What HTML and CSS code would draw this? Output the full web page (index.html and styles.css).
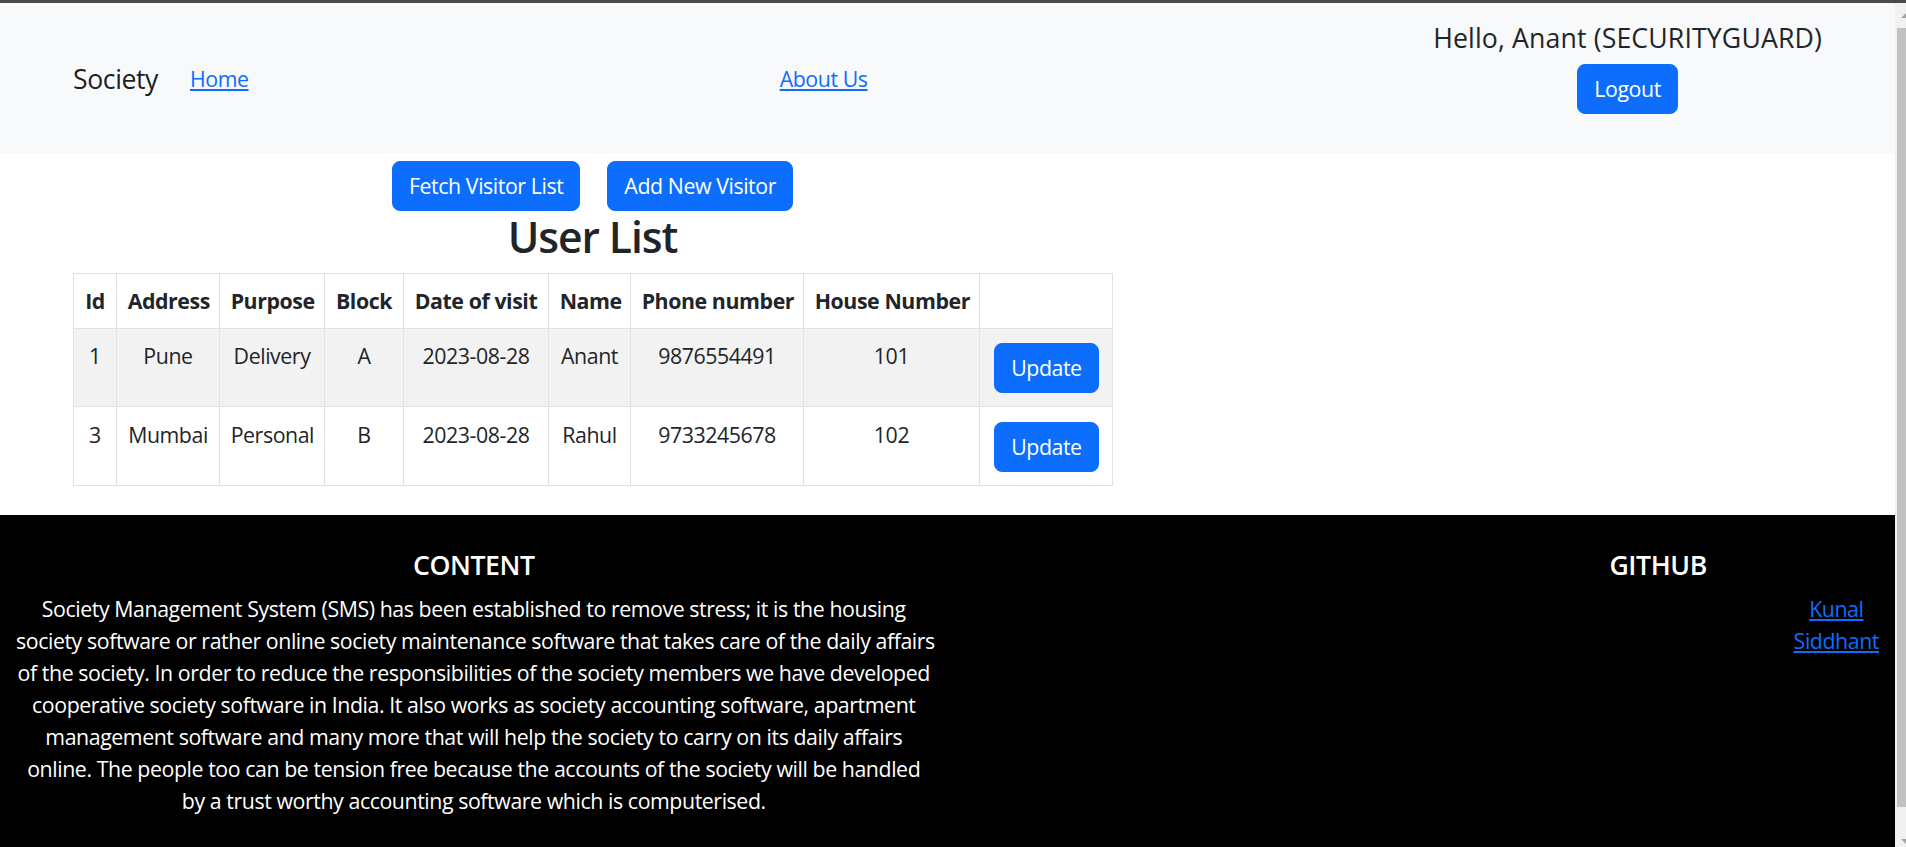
FILE: index.html
```html
<!DOCTYPE html>
<html lang="en">
<head>
<meta charset="utf-8">
<title>Society</title>
<link rel="stylesheet" href="styles.css">
</head>
<body>
<div class="window-edge"></div>
<div class="page">
  <nav class="navbar">
    <div class="nav-left">
      <a class="brand" href="#">Society</a>
      <a class="nav-link" href="#">Home</a>
    </div>
    <a class="nav-link" href="#">About Us</a>
    <div class="user-box">
      <h5 class="greeting">Hello, Anant (SECURITYGUARD)</h5>
      <button class="btn">Logout</button>
    </div>
  </nav>

  <main class="content">
    <div class="actions">
      <button class="btn">Fetch Visitor List</button>
      <button class="btn">Add New Visitor</button>
    </div>
    <h2 class="title">User List</h2>
    <table class="visitors">
      <colgroup>
        <col class="c-id"><col class="c-address"><col class="c-purpose"><col class="c-block"><col class="c-date"><col class="c-name"><col class="c-phone"><col class="c-house"><col class="c-action">
      </colgroup>
      <thead>
        <tr><th>Id</th><th>Address</th><th>Purpose</th><th>Block</th><th>Date of visit</th><th>Name</th><th>Phone number</th><th>House Number</th><th></th></tr>
      </thead>
      <tbody>
        <tr class="striped"><td>1</td><td>Pune</td><td>Delivery</td><td>A</td><td>2023-08-28</td><td>Anant</td><td>9876554491</td><td>101</td><td><button class="btn btn-row">Update</button></td></tr>
        <tr><td>3</td><td>Mumbai</td><td>Personal</td><td>B</td><td>2023-08-28</td><td>Rahul</td><td>9733245678</td><td>102</td><td><button class="btn btn-row">Update</button></td></tr>
      </tbody>
    </table>
  </main>

  <footer class="footer">
    <div class="footer-col about">
      <h5 class="footer-title">CONTENT</h5>
      <p class="footer-text">Society Management System (SMS) has been established to remove stress; it is the housing<br>society software or rather online society maintenance software that takes care of the daily affairs<br>of the society. In order to reduce the responsibilities of the society members we have developed<br>cooperative society software in India. It also works as society accounting software, apartment<br>management software and many more that will help the society to carry on its daily affairs<br>online. The people too can be tension free because the accounts of the society will be handled<br>by a trust worthy accounting software which is computerised.</p>
    </div>
    <div class="footer-col github">
      <h5 class="footer-title">GITHUB</h5>
      <div class="footer-links">
        <a href="#">Kunal</a>
        <a href="#">Siddhant</a>
      </div>
    </div>
  </footer>
</div>

<div class="scrollbar">
  <div class="sb-up"></div>
  <div class="sb-thumb"></div>
  <div class="sb-down"></div>
</div>
</body>
</html>
```

FILE: styles.css
```css
html {
  overflow: hidden;
}

body {
  margin: 0;
  font-family: "Open Sans", "Noto Sans", sans-serif;
  font-size: 21.33px;
  line-height: 1.5;
  color: #212529;
  background: #ffffff;
  letter-spacing: -0.02em;
}

.window-edge {
  height: 3px;
  background: #4a4a4a;
}

.page {
  width: 1895px;
}

/* ---------- navbar ---------- */
.navbar {
  display: flex;
  align-items: center;
  height: 150px;
  padding: 2px 73px 0;
  box-sizing: border-box;
  background: #f8f9fa;
}

.nav-left {
  display: flex;
  align-items: center;
  width: 696px;
  flex: none;
}

.brand {
  font-size: 26.67px;
  line-height: 40px;
  color: rgba(0, 0, 0, 0.9);
  text-decoration: none;
  margin-right: 21.33px;
}

.nav-link {
  padding: 0 10.67px;
  line-height: 32px;
  color: #0d6efd;
  text-decoration: underline;
}

.user-box {
  margin-left: auto;
  align-self: flex-start;
  margin-top: 17px;
  text-align: center;
}

.greeting {
  margin: 0 0 10px;
  font-size: 26.67px;
  line-height: 1.2;
  font-weight: 500;
  letter-spacing: 0.005em;
  color: #212529;
}

/* ---------- buttons ---------- */
.btn {
  display: inline-block;
  font-family: inherit;
  font-size: 21.33px;
  line-height: 32px;
  letter-spacing: -0.02em;
  padding: 8px 16px;
  border: 1px solid #0d6efd;
  border-radius: 8px;
  background: #0d6efd;
  color: #ffffff;
  cursor: pointer;
}

.btn-row {
  margin: 3px 3.5px;
}

/* ---------- main ---------- */
.content {
  width: 1039px;
  margin: 0 0 29px 73px;
  text-align: center;
}

.actions {
  display: flex;
  justify-content: center;
  gap: 27px;
  padding-top: 8px;
}

.title {
  margin: 0 0 10.67px;
  font-size: 42.67px;
  line-height: 1.2;
  font-weight: 550;
  letter-spacing: -0.025em;
}

.visitors {
  width: 1039px;
  border-collapse: collapse;
  table-layout: fixed;
  text-align: center;
}

.visitors th,
.visitors td {
  border: 1px solid #dee2e6;
  padding: 11.2px 10.67px 10.67px;
  vertical-align: top;
  line-height: 32px;
  white-space: nowrap;
}

.visitors td {
  padding-bottom: 10.6px;
}

.visitors th {
  font-weight: 700;
}

.visitors .striped td {
  background: #f2f2f2;
}

.c-id { width: 43px; }
.c-address { width: 103px; }
.c-purpose { width: 105px; }
.c-block { width: 79px; }
.c-date { width: 145px; }
.c-name { width: 82px; }
.c-phone { width: 173px; }
.c-house { width: 176px; }
.c-action { width: 133px; }

/* ---------- footer ---------- */
.footer {
  display: flex;
  background: #000000;
  color: #ffffff;
  padding: 34px 0 34px;
}

.footer-col {
  box-sizing: border-box;
  padding: 0 16px;
}

.about {
  width: 947.5px;
  text-align: center;
}

.github {
  width: 473.75px;
  margin-left: auto;
}

.footer-title {
  margin: 0 0 12px;
  font-size: 26.67px;
  line-height: 1.2;
  font-weight: 600;
  text-align: center;
}

.footer-text {
  margin: 0 0 21.33px;
  white-space: nowrap;
}

.footer-links {
  display: flex;
  flex-direction: column;
  align-items: center;
  width: fit-content;
  margin-left: auto;
}

.footer-links a {
  color: #0d6efd;
  text-decoration: underline;
}

/* ---------- window scrollbar (screenshot chrome) ---------- */
.scrollbar {
  position: fixed;
  top: 3px;
  right: 0;
  width: 11px;
  bottom: 0;
  background: #f1f1f1;
}

.sb-up {
  position: absolute;
  top: 10px;
  right: 0;
  width: 0;
  height: 0;
  border-left: 5px solid transparent;
  border-bottom: 5px solid #a3a3a3;
}

.sb-thumb {
  position: absolute;
  top: 25px;
  left: 2px;
  right: 0;
  height: 779px;
  background: #c1c1c1;
}

.sb-down {
  position: absolute;
  bottom: 3px;
  right: 0;
  width: 0;
  height: 0;
  border-left: 5px solid transparent;
  border-top: 5px solid #a3a3a3;
}
```
